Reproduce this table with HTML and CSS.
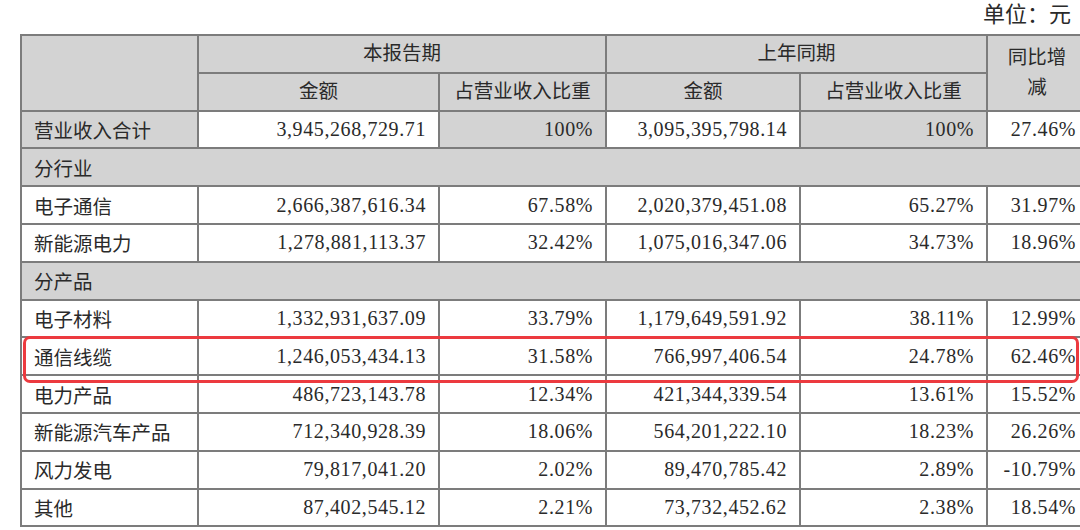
FILE: index.html
```html
<!DOCTYPE html>
<html lang="zh-CN">
<head>
<meta charset="utf-8">
<link rel="stylesheet" href="styles.css">
</head>
<body>
<div class="page">
  <div class="unit">单位：元</div>
  <div class="sheet">
    <table class="fin">
      <colgroup>
        <col class="c-name"><col class="c-amt1"><col class="c-pct1"><col class="c-amt2"><col class="c-pct2"><col class="c-yoy">
      </colgroup>
      <thead>
        <tr>
          <th rowspan="2"></th>
          <th colspan="2">本报告期</th>
          <th colspan="2">上年同期</th>
          <th rowspan="2" class="yoy-head">同比增减</th>
        </tr>
        <tr>
          <th>金额</th>
          <th>占营业收入比重</th>
          <th>金额</th>
          <th>占营业收入比重</th>
        </tr>
      </thead>
      <tbody>
        <tr>
          <td class="label gray">营业收入合计</td>
          <td class="num">3,945,268,729.71</td>
          <td class="num gray">100%</td>
          <td class="num">3,095,395,798.14</td>
          <td class="num gray">100%</td>
          <td class="num">27.46%</td>
        </tr>
        <tr class="section"><td colspan="6" class="label">分行业</td></tr>
        <tr>
          <td class="label">电子通信</td>
          <td class="num">2,666,387,616.34</td>
          <td class="num">67.58%</td>
          <td class="num">2,020,379,451.08</td>
          <td class="num">65.27%</td>
          <td class="num">31.97%</td>
        </tr>
        <tr>
          <td class="label">新能源电力</td>
          <td class="num">1,278,881,113.37</td>
          <td class="num">32.42%</td>
          <td class="num">1,075,016,347.06</td>
          <td class="num">34.73%</td>
          <td class="num">18.96%</td>
        </tr>
        <tr class="section"><td colspan="6" class="label">分产品</td></tr>
        <tr>
          <td class="label">电子材料</td>
          <td class="num">1,332,931,637.09</td>
          <td class="num">33.79%</td>
          <td class="num">1,179,649,591.92</td>
          <td class="num">38.11%</td>
          <td class="num">12.99%</td>
        </tr>
        <tr>
          <td class="label">通信线缆</td>
          <td class="num">1,246,053,434.13</td>
          <td class="num">31.58%</td>
          <td class="num">766,997,406.54</td>
          <td class="num">24.78%</td>
          <td class="num">62.46%</td>
        </tr>
        <tr>
          <td class="label">电力产品</td>
          <td class="num">486,723,143.78</td>
          <td class="num">12.34%</td>
          <td class="num">421,344,339.54</td>
          <td class="num">13.61%</td>
          <td class="num">15.52%</td>
        </tr>
        <tr>
          <td class="label">新能源汽车产品</td>
          <td class="num">712,340,928.39</td>
          <td class="num">18.06%</td>
          <td class="num">564,201,222.10</td>
          <td class="num">18.23%</td>
          <td class="num">26.26%</td>
        </tr>
        <tr>
          <td class="label">风力发电</td>
          <td class="num">79,817,041.20</td>
          <td class="num">2.02%</td>
          <td class="num">89,470,785.42</td>
          <td class="num">2.89%</td>
          <td class="num">-10.79%</td>
        </tr>
        <tr>
          <td class="label">其他</td>
          <td class="num">87,402,545.12</td>
          <td class="num">2.21%</td>
          <td class="num">73,732,452.62</td>
          <td class="num">2.38%</td>
          <td class="num">18.54%</td>
        </tr>
      </tbody>
    </table>
    <div class="highlight"></div>
  </div>
</div>
</body>
</html>
```

FILE: styles.css
```css
html, body {
  margin: 0;
  padding: 0;
  background: #ffffff;
}
body {
  width: 1080px;
  height: 530px;
  overflow: hidden;
  font-family: "Liberation Serif", "Noto Sans CJK SC", serif;
  color: #2a2a2a;
}
.page {
  width: 1080px;
}
.unit {
  height: 34px;
  box-sizing: border-box;
  padding: 1px 9px 0 0;
  text-align: right;
  font-size: 22px;
  line-height: 28px;
  color: #2a2a2a;
}
.sheet {
  position: relative;
  margin-left: 20px;
  width: 1060px;
  overflow: hidden;
}
.fin {
  border-collapse: collapse;
  table-layout: fixed;
  width: 1068px;
  font-size: 19.5px;
}
.c-name { width: 177px; }
.c-amt1 { width: 241px; }
.c-pct1 { width: 167px; }
.c-amt2 { width: 194px; }
.c-pct2 { width: 187px; }
.c-yoy { width: 102px; }
.fin th, .fin td {
  border: 2px solid #7c7c7c;
  height: 37.8px;
  padding: 0 12px;
  box-sizing: border-box;
  white-space: nowrap;
  overflow: hidden;
}
.fin th {
  background: #d3d3d3;
  font-weight: normal;
  text-align: center;
  line-height: 24px;
}
.fin th.yoy-head {
  white-space: normal;
  padding: 0 16px 0 14px;
  line-height: 30px;
}
.fin td.label {
  text-align: left;
}
.fin td.num {
  text-align: right;
  font-size: 20px;
  letter-spacing: 0.6px;
}
.fin td.gray,
.fin tr.section td {
  background: #d3d3d3;
}
.highlight {
  position: absolute;
  left: 3px;
  top: 302px;
  width: 1056px;
  height: 47px;
  box-sizing: border-box;
  border: 3.5px solid #ec3a3f;
  border-radius: 7px;
  pointer-events: none;
}
```
